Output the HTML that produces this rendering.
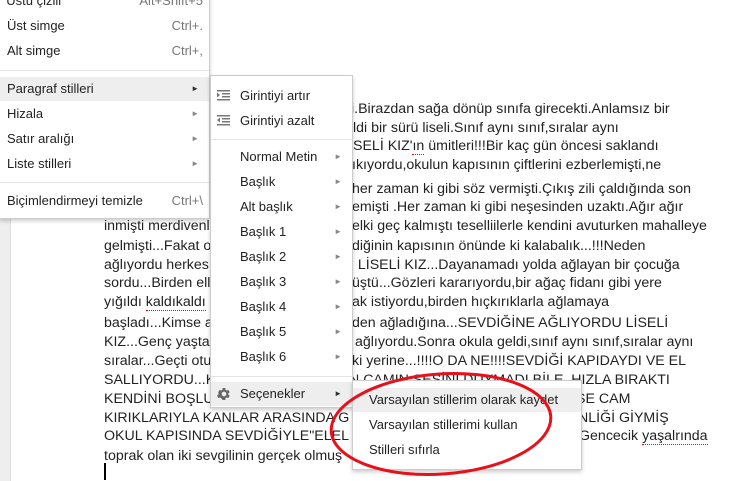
<!DOCTYPE html>
<html><head><meta charset="utf-8"><style>
body{margin:0;width:730px;height:481px;overflow:hidden;background:#fff;font-family:"Liberation Sans",Arial,sans-serif;position:relative}
.gray{position:absolute;left:0;top:0;width:10px;height:481px;background:#eee;border-right:1px solid #ddd}
.t{position:absolute;font-size:14.2px;color:#222;white-space:nowrap;line-height:18px}
.l{left:104px;width:246px;overflow:hidden}
.menu{position:absolute;background:#fff;border:1px solid #ccc;box-shadow:0 2px 4px rgba(0,0,0,.2);font-size:13px;color:#222}
.it{position:absolute;left:0;right:0;height:24px;line-height:24px}
.hl{background:#eee}
.sc{position:absolute;right:6px;color:#777}
.ar{position:absolute;right:10px;color:#888;font-size:8px}
.sep{position:absolute;left:0;right:0;height:1px;background:#e5e5e5}
.u{border-bottom:1px dotted red}
</style></head><body>
<div class="gray"></div>
<div class="t l" style="top:100px">Sonra okula geldi.Kapının önüne geldi</div>
<div class="t" style="top:100px;left:351px">i.Birazdan sağa dönüp sınıfa girecekti.Anlamsız bir</div>
<div class="t l" style="top:119px">gülümseme vardı yüzünde.Herkes geldi</div>
<div class="t" style="top:119px;left:353px">ldi bir sürü liseli.Sınıf aynı sınıf,sıralar aynı</div>
<div class="t l" style="top:137px">sıralardı.Fakat yoktu.Yoktu çünkü LİSELİ</div>
<div class="t" style="top:137px;left:353px">SELİ KIZ'<span class="u">ın</span> ümitleri!!!Bir kaç gün öncesi saklandı</div>
<div class="t l" style="top:156px">gözlerinde.Her gün yol boyunca bakıyordu</div>
<div class="t" style="top:156px;left:352px">ıkıyordu,okulun kapısının çiftlerini ezberlemişti,ne</div>
<div class="t l" style="top:180px">olursa olsun gelecekti.Gelecekti her</div>
<div class="t" style="top:180px;left:352px">her zaman ki gibi söz vermişti.Çıkış zili çaldığında son</div>
<div class="t l" style="top:198px">kez baktı,gelmedi.Hayır gelmemişti</div>
<div class="t" style="top:198px;left:352px">emişti .Her zaman ki gibi neşesinden uzaktı.Ağır ağır</div>
<div class="t l" style="top:217px">inmişti merdivenlerden.Belki</div>
<div class="t" style="top:217px;left:352px">elki geç kalmıştı teselliilerle kendini avuturken mahalleye</div>
<div class="t l" style="top:237px">gelmişti...Fakat o da ne sevdiğinin</div>
<div class="t" style="top:237px;left:352px">diğinin kapısının önünde ki kalabalık...!!!Neden</div>
<div class="t l" style="top:256px">ağlıyordu herkes ağlıyordu</div>
<div class="t" style="top:256px;left:350px">ı LİSELİ KIZ...Dayanamadı yolda ağlayan bir çocuğa</div>
<div class="t l" style="top:274px">sordu...Birden elleri düştü</div>
<div class="t" style="top:274px;left:352px">üştü...Gözleri kararıyordu,bir ağaç fidanı gibi yere</div>
<div class="t l" style="top:293px">yığıldı <span class="u">kaldıkaldı</span> ağlamak</div>
<div class="t" style="top:293px;left:352px">ak istiyordu,birden hıçkırıklarla ağlamaya</div>
<div class="t l" style="top:314px">başladı...Kimse anlamamıştı neden</div>
<div class="t" style="top:314px;left:352px">den ağladığına...SEVDİĞİNE AĞLIYORDU LİSELİ</div>
<div class="t l" style="top:333px">KIZ...Genç yaştaki o kız ağlıyordu</div>
<div class="t" style="top:333px;left:355px">ağlıyordu.Sonra okula geldi,sınıf aynı sınıf,sıralar aynı</div>
<div class="t l" style="top:352px">sıralar...Geçti oturdu eski yerine</div>
<div class="t" style="top:352px;left:352px">ki yerine...!!!!O DA NE!!!!SEVDİĞİ KAPIDAYDI VE EL</div>
<div class="t l" style="top:371px">SALLIYORDU...KIRILAN</div>
<div class="t" style="top:371px;left:349px">N CAMIN SESİNİ DUYMADI BİLE .HIZLA BIRAKTI</div>
<div class="t l" style="top:390px">KENDİNİ BOŞLUĞA...KIRILAN PENCERE</div>
<div class="t" style="top:390px;left:576px">SE CAM</div>
<div class="t l" style="top:409px">KIRIKLARIYLA KANLAR ARASINDA GELİ</div>
<div class="t" style="top:409px;left:578px">NLİĞİ GİYMİŞ</div>
<div class="t l" style="top:427px">OKUL KAPISINDA SEVDİĞİYLE"ELELE</div>
<div class="t" style="top:427px;left:579px">Gencecik <span class="u">yaşalrında</span></div>
<div class="t l" style="top:447px">toprak olan iki sevgilinin gerçek olmuş</div>
<div style="position:absolute;left:104px;top:463px;width:2px;height:17px;background:#000"></div>

<div class="menu" style="left:-1px;top:-12px;width:210px;height:229px;border-left:none">
<div class="it" style="top:0">&nbsp;&nbsp;Üstü çizili<span class="sc">Alt+Shift+5</span></div>
<div class="it" style="top:25px;padding-left:8px">Üst simge<span class="sc">Ctrl+.</span></div>
<div class="it" style="top:50px;padding-left:8px">Alt simge<span class="sc">Ctrl+,</span></div>
<div class="sep" style="top:81px"></div>
<div class="it hl" style="top:88px;padding-left:8px">Paragraf stilleri<span class="ar" style="color:#333">►</span></div>
<div class="it" style="top:113px;padding-left:8px">Hizala<span class="ar">►</span></div>
<div class="it" style="top:138px;padding-left:8px">Satır aralığı<span class="ar">►</span></div>
<div class="it" style="top:163px;padding-left:8px">Liste stilleri<span class="ar">►</span></div>
<div class="sep" style="top:193px"></div>
<div class="it" style="top:200px;padding-left:8px">Biçimlendirmeyi temizle<span class="sc">Ctrl+\</span></div>
</div>

<div class="menu" style="left:210px;top:75px;width:141px;height:331px">
<div class="it" style="top:8px;padding-left:29px">Girintiyi artır</div>
<div class="it" style="top:33px;padding-left:29px">Girintiyi azalt</div>
<svg style="position:absolute;left:6px;top:14px" width="14" height="38"><g fill="#777"><rect x="0" y="0" width="13" height="1.5"/><rect x="5" y="3" width="8" height="1.5"/><rect x="5" y="6" width="8" height="1.5"/><rect x="0" y="9" width="13" height="1.5"/><path d="M0 2.5L3 5L0 7.5Z"/><rect x="0" y="25" width="13" height="1.5"/><rect x="5" y="28" width="8" height="1.5"/><rect x="5" y="31" width="8" height="1.5"/><rect x="0" y="34" width="13" height="1.5"/><path d="M3 27.5L0 30L3 32.5Z"/></g></svg>
<div class="sep" style="top:63px"></div>
<div class="it" style="top:69px;padding-left:29px">Normal Metin<span class="ar">►</span></div>
<div class="it" style="top:94px;padding-left:29px">Başlık<span class="ar">►</span></div>
<div class="it" style="top:119px;padding-left:29px">Alt başlık<span class="ar">►</span></div>
<div class="it" style="top:144px;padding-left:29px">Başlık 1<span class="ar">►</span></div>
<div class="it" style="top:169px;padding-left:29px">Başlık 2<span class="ar">►</span></div>
<div class="it" style="top:194px;padding-left:29px">Başlık 3<span class="ar">►</span></div>
<div class="it" style="top:219px;padding-left:29px">Başlık 4<span class="ar">►</span></div>
<div class="it" style="top:244px;padding-left:29px">Başlık 5<span class="ar">►</span></div>
<div class="it" style="top:269px;padding-left:29px">Başlık 6<span class="ar">►</span></div>
<div class="sep" style="top:300px"></div>
<div class="it hl" style="top:306px;padding-left:29px">Seçenekler<span class="ar" style="color:#333">►</span></div>
<svg style="position:absolute;left:5px;top:310px" width="16" height="16" viewBox="0 0 24 24"><path fill="#666" fill-rule="evenodd" d="M19.4 13a7.5 7.5 0 000-2l2.1-1.6-2-3.5-2.5 1a7 7 0 00-1.7-1L15 3h-4l-.4 2.9a7 7 0 00-1.7 1l-2.5-1-2 3.5L4.6 11a7.5 7.5 0 000 2l-2.1 1.6 2 3.5 2.5-1a7 7 0 001.7 1L11 21h4l.4-2.9a7 7 0 001.7-1l2.5 1 2-3.5zM13 15.5a3.5 3.5 0 110-7 3.5 3.5 0 010 7z" transform="translate(-1 0)"/></svg>
</div>

<div class="menu" style="left:352px;top:380px;width:228px;height:88px">
<div class="it hl" style="top:7px;padding-left:16px">Varsayılan stillerim olarak kaydet</div>
<div class="it" style="top:32px;padding-left:16px">Varsayılan stillerimi kullan</div>
<div class="it" style="top:57px;padding-left:16px">Stilleri sıfırla</div>
</div>

<svg style="position:absolute;left:0;top:0" width="730" height="481"><ellipse cx="441" cy="424" rx="110" ry="50" transform="rotate(-4 441 424)" fill="none" stroke="#e8101a" stroke-width="3"/></svg>
</body></html>
